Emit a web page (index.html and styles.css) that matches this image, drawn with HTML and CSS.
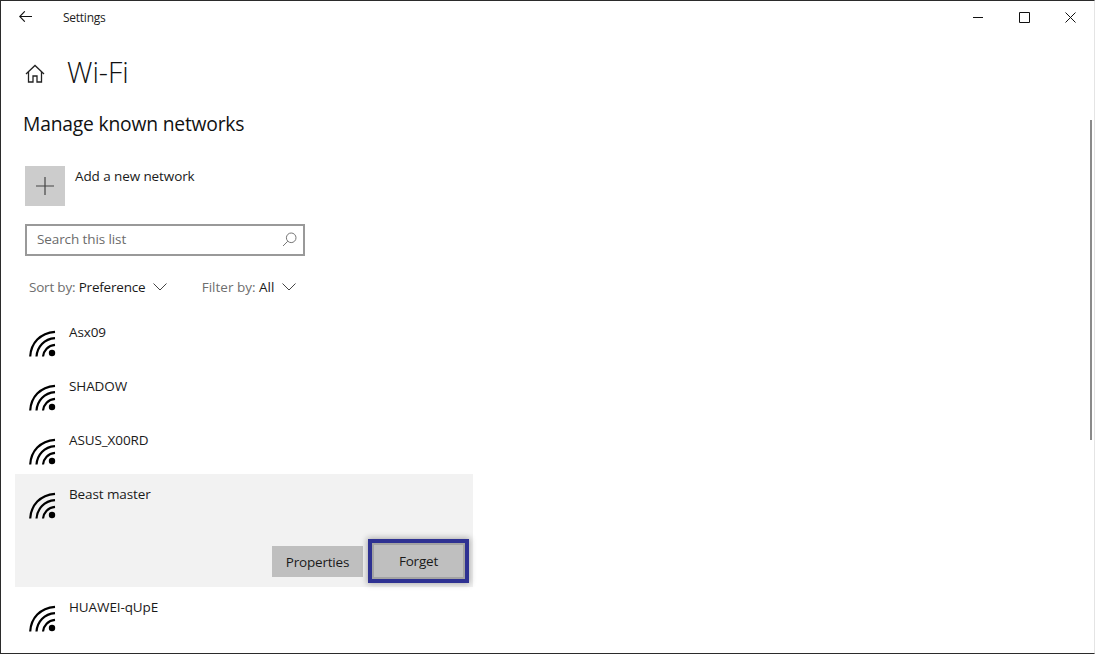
FILE: index.html
```html
<!DOCTYPE html>
<html lang="en">
<head>
    <meta charset="UTF-8">
    <meta name="viewport" content="width=device-width, initial-scale=1.0">
    <title>Settings</title>
    <link rel="stylesheet" href="styles.css">
</head>
<body>
    <svg class="icon-defs" width="0" height="0">
        <symbol id="wifi" viewBox="0 0 28 28">
            <path d="M1.200 26.500C2 13 11 3 26 1.800M7.500 26.500C8.300 17 15 9 26 8.200M14 26.500C14.600 20.500 19 15.500 26 14.800" fill="none" stroke="#000" stroke-width="2.200"/>
            <circle cx="23" cy="23" r="3.200" fill="#000"/>
        </symbol>
    </svg>
    <div class="window">
        <div class="title-bar">
            <svg class="back-icon" width="13" height="11" viewBox="0 0 13 11"><path d="M5.800.300.700 5.500l5.100 5.200M.700 5.500H13" fill="none" stroke="#111" stroke-width="1.100"/></svg>
            <span class="app-name">Settings</span>
            <div class="window-controls">
                <svg width="11" height="11" viewBox="0 0 11 11"><path d="M0 5.500h10" stroke="#111" fill="none"/></svg>
                <svg width="11" height="11" viewBox="0 0 11 11"><path d="M.5.500h10v10H.5z" stroke="#111" fill="none"/></svg>
                <svg width="11" height="11" viewBox="0 0 11 11"><path d="M.5.500l10 10M10.500.500l-10 10" stroke="#111" fill="none"/></svg>
            </div>
        </div>
        <div class="page-head">
            <svg class="home-icon" width="20" height="19" viewBox="0 0 20 19"><path d="M1 10 10 1.500 19 10M3.500 8v10h4.500v-6h4v6h4.500V8" fill="none" stroke="#222" stroke-width="1.300"/></svg>
            <h1>Wi-Fi</h1>
        </div>
        <h2>Manage known networks</h2>
        <div class="add-network">
            <div class="add-tile"><svg width="18" height="18" viewBox="0 0 18 18"><path d="M9 0v18M0 9h18" stroke="#444" stroke-width="1.200"/></svg></div>
            <span>Add a new network</span>
        </div>
        <div class="search-box">
            <span>Search this list</span>
            <svg width="15" height="15" viewBox="0 0 15 15"><circle cx="9.200" cy="5.800" r="4.800" fill="none" stroke="#777"/><path d="M5.800 9.200 1 14" stroke="#777"/></svg>
        </div>
        <div class="filters">
            <span class="filter filter-sort"><span class="muted">Sort by:</span> Preference
                <svg width="14" height="8" viewBox="0 0 14 8"><path d="M.5.500 7 7 13.500.500" fill="none" stroke="#444"/></svg></span>
            <span class="filter"><span class="muted">Filter by:</span> All
                <svg width="14" height="8" viewBox="0 0 14 8"><path d="M.5.500 7 7 13.500.500" fill="none" stroke="#444"/></svg></span>
        </div>
        <div class="network-list">
            <div class="network">
                <div class="network-main"><svg class="wifi-icon"><use href="#wifi"/></svg><span>Asx09</span></div>
            </div>
            <div class="network">
                <div class="network-main"><svg class="wifi-icon"><use href="#wifi"/></svg><span>SHADOW</span></div>
            </div>
            <div class="network">
                <div class="network-main"><svg class="wifi-icon"><use href="#wifi"/></svg><span>ASUS_X00RD</span></div>
            </div>
            <div class="network selected">
                <div class="network-main"><svg class="wifi-icon"><use href="#wifi"/></svg><span>Beast master</span></div>
                <div class="network-buttons">
                    <button type="button" class="btn">Properties</button>
                    <button type="button" class="btn btn-marked">Forget</button>
                </div>
            </div>
            <div class="network">
                <div class="network-main"><svg class="wifi-icon"><use href="#wifi"/></svg><span>HUAWEI-qUpE</span></div>
            </div>
        </div>
        <div class="scroll-thumb"></div>
    </div>
</body>
</html>
```

FILE: styles.css
```css
html, body {
    margin: 0;
    padding: 0;
}
body {
    font-family: "Open Sans", "Noto Sans", sans-serif;
    font-size: 13.500px;
    letter-spacing: -0.1px;
    color: #1a1a1a;
    background: white;
}
.icon-defs {
    display: block;
    height: 0;
}
.window {
    position: relative;
    box-sizing: border-box;
    width: 1095px;
    height: 654px;
    overflow: hidden;
    border: 1px solid #2b2b2b;
    border-right-color: #e4e4e4;
    background: white;
}
.title-bar {
    display: flex;
    align-items: center;
    height: 32px;
    padding-left: 18px;
}
.back-icon {
    margin: -1px 31px 0 0;
}
.app-name {
    font-size: 12px;
    letter-spacing: -0.25px;
    color: #222;
}
.window-controls {
    display: flex;
    gap: 35px;
    margin-left: auto;
    margin-right: 18px;
}
.page-head {
    display: flex;
    align-items: center;
    height: 38px;
    margin-top: 21px;
    padding-left: 24px;
}
.home-icon {
    margin-right: 22px;
}
h1 {
    margin: 0;
    padding-bottom: 2px;
    font-size: 28.500px;
    font-weight: 300;
    letter-spacing: 0;
    color: #111;
}
h2 {
    margin: 18px 0 0 22px;
    font-size: 19.300px;
    font-weight: 400;
    line-height: 28px;
    letter-spacing: -0.2px;
    color: #111;
}
.add-network {
    display: flex;
    margin: 28px 0 0 24px;
    gap: 10px;
    line-height: 20px;
}
.add-tile {
    display: flex;
    align-items: center;
    justify-content: center;
    width: 40px;
    height: 40px;
    background: #cccccc;
}
.search-box {
    display: flex;
    align-items: center;
    justify-content: space-between;
    box-sizing: border-box;
    width: 280px;
    height: 32px;
    margin: 18px 0 0 24px;
    padding: 0 6px 2px 10px;
    border: 2px solid #999;
    color: #6b6b6b;
}
.filters {
    display: flex;
    gap: 35px;
    margin: 20px 0 0 28px;
    height: 22px;
    line-height: 22px;
    letter-spacing: 0;
}
.filter-sort {
    letter-spacing: -0.2px;
}
.filter svg {
    margin-left: 4px;
    vertical-align: 1px;
}
.muted {
    color: #6e6e6e;
}
.network-list {
    margin: 14px 0 0 14px;
    width: 458px;
}
.network {
    height: 54px;
}
.network-main {
    display: flex;
    align-items: flex-start;
    padding: 10px 0 0 14px;
    line-height: 20px;
}
.wifi-icon {
    width: 28px;
    height: 28px;
    margin: 8px 12px 0 0;
}
.selected {
    height: 113px;
    background: #f2f2f2;
}
.network-buttons {
    display: flex;
    align-items: flex-start;
    justify-content: flex-end;
    gap: 9px;
    margin-top: 26px;
    padding-right: 8px;
}
.btn {
    width: 91px;
    height: 31px;
    border: none;
    padding: 0;
    font-family: inherit;
    font-size: 13.500px;
    letter-spacing: -0.2px;
    color: #1a1a1a;
    background: #bfbfbf;
}
.btn-marked {
    box-sizing: content-box;
    width: 89px;
    height: 32px;
    margin-top: -3px;
    border: 2px solid #a3a3a3;
    outline: 4px solid #2e3192;
    box-shadow: 0 0 6px 5px rgba(0, 0, 0, 0.3);
}
.scroll-thumb {
    position: absolute;
    top: 119px;
    right: 2px;
    width: 2px;
    height: 320px;
    background: #8a8a8a;
}
```
